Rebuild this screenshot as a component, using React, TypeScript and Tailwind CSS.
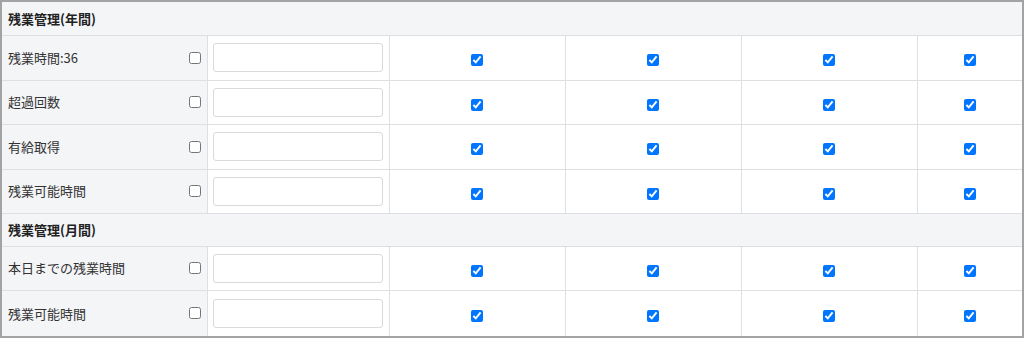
import { useState } from 'react';

type Row =
  | { kind: 'section'; label: string }
  | { kind: 'item'; label: string; h: string };

const ROWS: Row[] = [
  { kind: 'section', label: '残業管理(年間)' },
  { kind: 'item', label: '残業時間:36', h: 'h-[45px]' },
  { kind: 'item', label: '超過回数', h: 'h-[44px]' },
  { kind: 'item', label: '有給取得', h: 'h-[45px]' },
  { kind: 'item', label: '残業可能時間', h: 'h-[44px]' },
  { kind: 'section', label: '残業管理(月間)' },
  { kind: 'item', label: '本日までの残業時間', h: 'h-[44px]' },
  { kind: 'item', label: '残業可能時間', h: 'h-[46px]' },
];

const COLS = [0, 1, 2, 3];

function ItemRow({ label, h }: { label: string; h: string }) {
  const [enabled, setEnabled] = useState(false);
  const [value, setValue] = useState('');
  return (
    <tr className={`${h} border-b border-[#dedfe3] last:border-b-0`}>
      <td className="bg-[#f4f5f7] border-r border-[#dedfe3] pl-[6px] pr-[6px]">
        <div className="flex items-center justify-between">
          <span className="text-[13px] text-[#333]">{label}</span>
          <input
            type="checkbox"
            checked={enabled}
            onChange={e => setEnabled(e.target.checked)}
            className="w-[12px] h-[12px] m-0"
          />
        </div>
      </td>
      <td className="border-r border-[#dedfe3] pl-[5px] pr-[6px]">
        <input
          type="text"
          value={value}
          onChange={e => setValue(e.target.value)}
          className="w-full h-[29px] border border-[#d9dadd] rounded-[3px] bg-white px-2 text-[13px] outline-none focus:border-blue-400"
        />
      </td>
      {COLS.map(c => (
        <td key={c} className="border-r border-[#dedfe3] last:border-r-0 text-center">
          <input type="checkbox" defaultChecked className="w-[12px] h-[12px] m-0 align-middle" />
        </td>
      ))}
    </tr>
  );
}

export default function App() {
  return (
    <div className="w-[1024px] h-[338px] bg-white border-2 border-[#a3a3a3] overflow-hidden font-['Noto_Sans_CJK_JP','Noto_Sans',sans-serif]">
      <table className="w-full table-fixed border-collapse">
        <colgroup>
          <col className="w-[205px]" />
          <col className="w-[182px]" />
          <col className="w-[176px]" />
          <col className="w-[176px]" />
          <col className="w-[176px]" />
          <col />
        </colgroup>
        <tbody>
          {ROWS.map((r, i) =>
            r.kind === 'section' ? (
              <tr key={i} className="h-[33px] bg-[#f4f5f7] border-b border-[#dedfe3]">
                <td colSpan={6} className="pl-[6px] text-[13px] font-bold text-[#222]">
                  {r.label}
                </td>
              </tr>
            ) : (
              <ItemRow key={i} label={r.label} h={r.h} />
            )
          )}
        </tbody>
      </table>
    </div>
  );
}
